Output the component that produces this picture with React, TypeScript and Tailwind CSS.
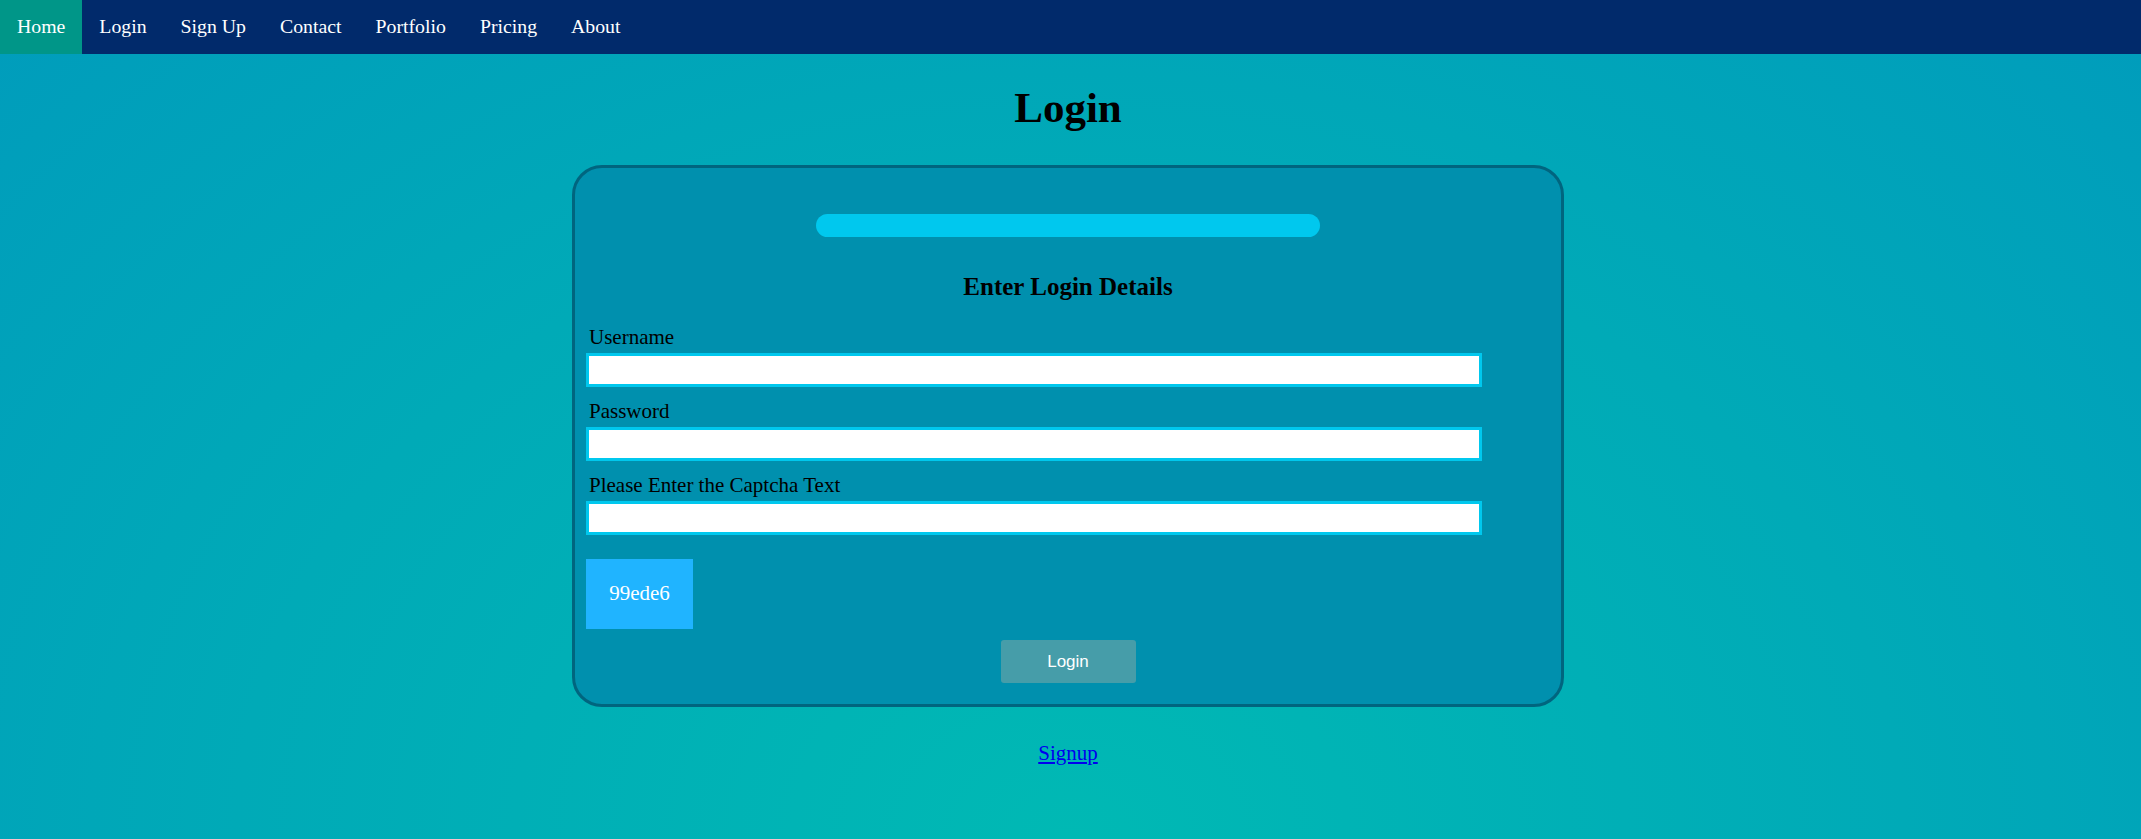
import React from "react";

const serif = "font-['Liberation_Serif','Times_New_Roman',serif]";

const navItems = ["Home", "Login", "Sign Up", "Contact", "Portfolio", "Pricing", "About"];

function NavBar() {
  return (
    <nav className="flex h-[54px] w-full bg-[#012a6b]">
      {navItems.map((item, i) => (
        <a
          key={item}
          href="#"
          className={`flex items-center px-[17px] text-[19.8px] text-white ${i === 0 ? "bg-[#009688]" : ""}`}
        >
          {item}
        </a>
      ))}
    </nav>
  );
}

function Field({ label, type = "text" }: { label: string; type?: string }) {
  return (
    <div className="flex flex-col">
      <label className="pl-[3px] text-[21px] leading-[24px] text-black">{label}</label>
      <input
        type={type}
        className="mt-[4px] h-[34px] w-[896px] border-[3px] border-[#00c8ee] bg-white outline-none"
      />
    </div>
  );
}

function App() {
  return (
    <div
      className={`${serif} min-h-screen bg-[radial-gradient(ellipse_at_50%_100%,#00b9b4_0%,#00aab7_55%,#009cbc_100%)]`}
    >
      <NavBar />
      <main className="flex flex-col items-center pr-[5px]">
        <h1 className="mt-[32px] text-[43px] font-bold leading-[43px] text-black">Login</h1>

        <div className="mt-[36px] flex w-[992px] flex-col rounded-[30px] border-[3px] border-[#00657f] bg-[#0090ae] px-[11px] pb-[21px]">
          <div className="mx-auto mt-[46px] h-[23px] w-[504px] rounded-full bg-[#00c8ee]" />
          <h3 className="mt-[35px] text-center text-[25px] font-bold leading-[29px] text-black">
            Enter Login Details
          </h3>

          <div className="mt-[24px] flex flex-col gap-[12px]">
            <Field label="Username" />
            <Field label="Password" type="password" />
            <Field label="Please Enter the Captcha Text" />
          </div>

          <div className="mt-[24px] flex h-[70px] w-[107px] items-center justify-center bg-[#20b4ff] text-[21px] text-white">
            99ede6
          </div>

          <button className="mx-auto mt-[11px] h-[43px] w-[135px] rounded-[3px] bg-[#469da9] font-['Liberation_Sans',Arial,sans-serif] text-[17px] text-white">
            Login
          </button>
        </div>

        <a href="#" className="mt-[34px] text-[21px] leading-[24px] text-[#0000ee] underline">
          Signup
        </a>
      </main>
    </div>
  );
}

export default App;
